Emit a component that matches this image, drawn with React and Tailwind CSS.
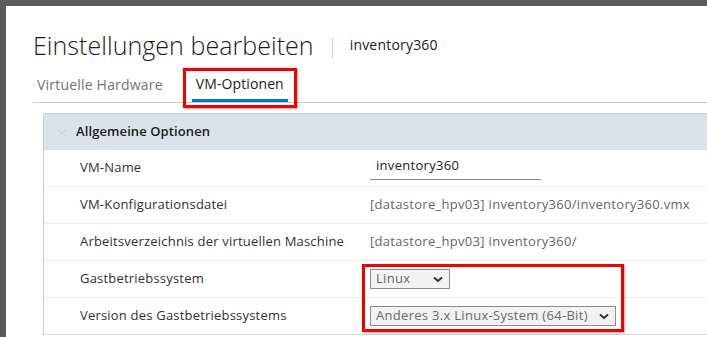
import { ChevronDown } from "lucide-react"

const font = { fontFamily: '"Open Sans", "Liberation Sans", sans-serif' }

function Row({ label, children, last }) {
  return (
    <div className={`flex h-[37px] items-center border-b ${last ? "border-[#d8d8d8]" : "border-[#ececec]"}`}>
      <div className="w-[326px] shrink-0 pl-[36px] text-[13px] tracking-[0.2px] text-[#313131]">{label}</div>
      <div className="flex-1 text-[13px] tracking-[0.3px] text-[#666]">{children}</div>
    </div>
  )
}

function Select({ value, width }) {
  return (
    <div
      className="flex h-[20px] items-center justify-between border border-[#8c8c8c] bg-[#f2f2f2] pl-[5px] pr-[6px] text-[13px] text-[#6a6a6a]"
      style={{ width }}
    >
      <span>{value}</span>
      <svg width="10" height="7" viewBox="0 0 10 7" className="text-[#333]">
        <path d="M1 1.5 L5 5 L9 1.5" fill="none" stroke="currentColor" strokeWidth="2" />
      </svg>
    </div>
  )
}

export default function App() {
  return (
    <div className="h-[337px] w-[707px] overflow-hidden bg-[#5b5b5b]" style={font}>
      <div className="ml-[6px] mt-[6px] h-[331px] bg-white pl-[27px]">
        {/* Title */}
        <div className="flex h-[58px] items-end pb-[6px]">
          <h1 className="text-[25px] font-light leading-none tracking-[0.05px] text-[#1b1b1b]">
            Einstellungen bearbeiten
          </h1>
          <div className="ml-[18px] mr-[17px] mb-[-1px] h-[21px] w-px bg-[#cfcfcf]" />
          <span className="mb-[3px] text-[14px] tracking-[0.2px] text-[#1b1b1b]">inventory360</span>
        </div>

        {/* Tabs */}
        <div className="flex h-[39px] items-end border-b border-[#cccccc]">
          <div className="pb-[7px] pl-[4px] text-[14px] tracking-[0.2px] text-[#737373]">Virtuelle Hardware</div>
          <div className="relative ml-[29px] flex flex-col items-center">
            <div className="px-[4px] pb-[5px] text-[14px] tracking-[0.1px] text-[#1b1b1b]">VM-Optionen</div>
            <div className="h-[3px] w-full bg-[#0079b8]" />
            <div className="pointer-events-none absolute left-[-9px] right-[-9px] top-[-5px] bottom-[-6px] border-[3px] border-[#ee0000] shadow-[1px_1px_2px_rgba(0,0,0,0.35)]" />
          </div>
        </div>

        {/* Panel */}
        <div className="ml-[10px] mt-[10px] rounded-tl-[3px] border-l border-t border-[#cccccc]">
          <div className="flex h-[36px] items-center bg-[#d9e4ea] pl-[12px]">
            <ChevronDown size={12} strokeWidth={1.2} className="text-[#a7b0b5]" />
            <span className="ml-[8px] text-[13px] font-semibold tracking-[0.1px] text-[#1b1b1b]">Allgemeine Optionen</span>
          </div>
          <Row label="VM-Name">
            <div className="w-[171px] border-b border-[#8c8c8c] pb-[3px] pl-[6px] text-[#1b1b1b]">inventory360</div>
          </Row>
          <Row label="VM-Konfigurationsdatei">[datastore_hpv03] inventory360/inventory360.vmx</Row>
          <Row label="Arbeitsverzeichnis der virtuellen Maschine">[datastore_hpv03] inventory360/</Row>
          <div className="relative">
            <Row label="Gastbetriebssystem">
              <Select value="Linux" width={80} />
            </Row>
            <Row label="Version des Gastbetriebssystems" last>
              <Select value="Anderes 3.x Linux-System (64-Bit)" width={246} />
            </Row>
            <div className="pointer-events-none absolute left-[318px] top-[3px] h-[68px] w-[262px] border-[3px] border-[#ee0000] shadow-[1px_1px_2px_rgba(0,0,0,0.35)]" />
          </div>
        </div>
      </div>
    </div>
  )
}
